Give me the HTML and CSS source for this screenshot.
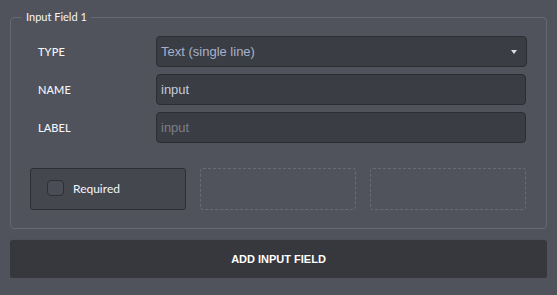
FILE: index.html
```html
<!DOCTYPE html>
<html lang="en">
<head>
  <meta charset="UTF-8" />
  <title>Input Field Editor</title>
  <link rel="stylesheet" href="styles.css">
</head>
<body>
  <fieldset class="field-box">
    <legend>Input Field 1</legend>

    <div class="rows">
      <label class="row-label" for="type">TYPE</label>
      <div class="select">
        <span>Text (single line)</span>
        <span class="caret"></span>
      </div>

      <label class="row-label" for="name">NAME</label>
      <input class="text-input" id="name" type="text" value="input" />

      <label class="row-label" for="label">LABEL</label>
      <input class="text-input" id="label" type="text" placeholder="input" />
    </div>

    <div class="options">
      <div class="option">
        <span class="check"></span>
        <span>Required</span>
      </div>
      <div class="slot"></div>
      <div class="slot"></div>
    </div>
  </fieldset>

  <button class="add-btn">ADD INPUT FIELD</button>
</body>
</html>
```

FILE: styles.css
```css
body {
  margin: 10px;
  background: #50535c;
  color: #fff;
  font-family: 'Lato', sans-serif;
}
.field-box {
  margin: 0;
  border: 1px solid #656972;
  border-radius: 4px;
  padding: 12px 20px 18px 19px;
}
.field-box legend {
  margin-left: -8px;
  padding: 0 4px;
  font-size: 11px;
  line-height: 14px;
  color: #f4f6fb;
}
.rows {
  display: grid;
  grid-template-columns: 126px 1fr;
  row-gap: 7px;
  align-items: center;
}
.row-label {
  padding-left: 8px;
  font-size: 11px;
  font-weight: 500;
  letter-spacing: 0.1px;
  color: #f4f6fb;
}
.select, .text-input {
  box-sizing: border-box;
  height: 31px;
  margin: 0 -1px 0 0;
  background: #3b3d44;
  border: 1px solid #2b2d32;
  border-radius: 4px;
  padding: 0 4px;
  font-family: 'Liberation Sans', Arial, sans-serif;
  font-size: 13px;
  outline: none;
}
.select {
  display: flex;
  align-items: center;
  justify-content: space-between;
  color: #a6b2cc;
  padding-right: 9px;
}
.caret {
  width: 0;
  height: 0;
  border-left: 3.5px solid transparent;
  border-right: 3.5px solid transparent;
  border-top: 4px solid #d8dde8;
}
.text-input {
  width: 100%;
  color: #c3cbdd;
}
.text-input::placeholder {
  color: #7b7f88;
}
.options {
  display: grid;
  grid-template-columns: repeat(3, 156px);
  gap: 14px;
  margin-top: 25px;
}
.option {
  box-sizing: border-box;
  height: 42px;
  display: flex;
  align-items: center;
  gap: 9px;
  padding-left: 16px;
  padding-bottom: 2px;
  background: #45474f;
  border: 1px solid #2c2e33;
  border-radius: 3px;
  font-size: 12px;
  color: #f4f6fb;
}
.check {
  box-sizing: border-box;
  width: 17px;
  height: 16px;
  background: #4a4d55;
  border: 1px solid #2e3035;
  border-radius: 4px;
}
.slot {
  height: 42px;
  box-sizing: border-box;
  border: 1px dashed #686c75;
  border-radius: 3px;
}
.add-btn {
  display: block;
  width: 100%;
  height: 38px;
  margin-top: 11px;
  background: #37383e;
  border: none;
  border-radius: 3px;
  box-shadow: 0 1px 3px rgba(0,0,0,0.25);
  color: #fff;
  font-family: 'Liberation Sans', Arial, sans-serif;
  font-weight: bold;
  font-size: 11px;
}
```
